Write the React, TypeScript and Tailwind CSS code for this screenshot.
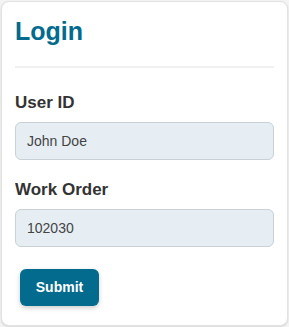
import { useState } from "react";

const FONT = "font-['Liberation_Sans',Arial,sans-serif]";

const Field = ({
  label,
  value,
  onChange,
}: {
  label: string;
  value: string;
  onChange: (next: string) => void;
}) => {
  return (
    <div className="flex flex-col">
      <label className="text-[17px] font-bold leading-[20px] text-[#333333]">{label}</label>
      <input
        className="mt-[9px] h-[38px] w-full rounded-[6px] border border-[#c9d1d7] bg-[#e6eef4] px-[11px] text-[14px] text-[#444444] outline-none"
        value={value}
        onChange={(event) => {
          onChange(event.target.value);
        }}
      />
    </div>
  );
};

const App = () => {
  const [userId, setUserId] = useState("John Doe");
  const [workOrder, setWorkOrder] = useState("102030");

  return (
    <div className={`min-h-[327px] w-[289px] bg-[#f4f4f4] p-px ${FONT}`}>
      <div className="flex h-[325px] w-[287px] flex-col rounded-[8px] border border-[#e3e3e3] bg-white px-[13px] pt-[14px] shadow-sm">
        <h1 className="text-[25px] font-bold leading-[30px] text-[#026b8e]">Login</h1>
        <div className="mt-[20px] h-[2px] bg-[#f0f0f0]" />
        <form
          className="mt-[25px] flex flex-col"
          onSubmit={(event) => {
            event.preventDefault();
          }}
        >
          <Field label="User ID" value={userId} onChange={setUserId} />
          <div className="mt-[20px]">
            <Field label="Work Order" value={workOrder} onChange={setWorkOrder} />
          </div>
          <div className="mt-[22px] flex">
            <button
              type="submit"
              className="ml-[5px] h-[37px] w-[79px] rounded-[6px] bg-[#026b8e] text-[14px] font-bold text-white shadow-[0_2px_5px_rgba(0,0,0,0.2)]"
            >
              Submit
            </button>
          </div>
        </form>
      </div>
    </div>
  );
};

export default App;
